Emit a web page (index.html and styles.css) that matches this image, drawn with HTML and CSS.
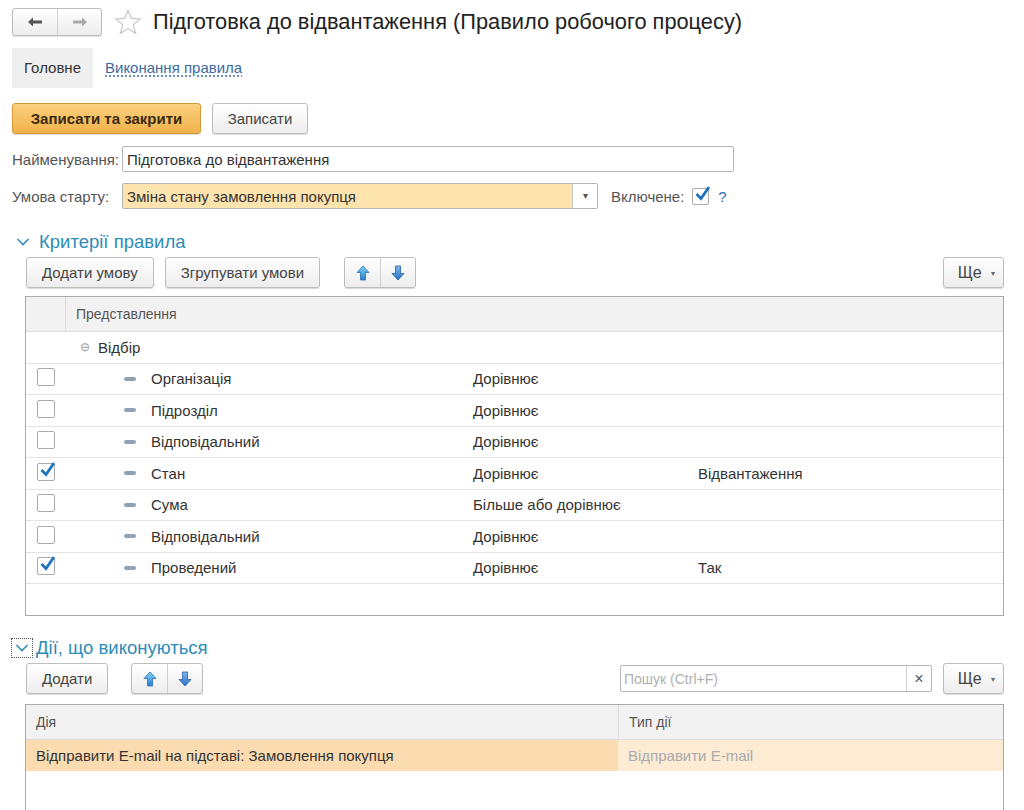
FILE: index.html
```html
<!DOCTYPE html>
<html lang="uk">
<head>
  <meta charset="UTF-8" />
  <title>Підготовка до відвантаження</title>
  <link rel="stylesheet" href="styles.css">
</head>
<body>

  <div class="title-bar">
    <div class="nav-group">
      <button class="nav-btn"><svg width="16" height="12" viewBox="0 0 16 12"><path d="M1 6 L6 1.5 L6 4.5 L15 4.5 L15 7.5 L6 7.5 L6 10.5 Z" fill="#555"/></svg></button>
      <button class="nav-btn"><svg width="16" height="12" viewBox="0 0 16 12"><path d="M15 6 L10 1.5 L10 4.5 L1 4.5 L1 7.5 L10 7.5 L10 10.5 Z" fill="#aaa"/></svg></button>
    </div>
    <svg class="star" width="28" height="28" viewBox="0 0 28 28"><path d="M14 2 L17.3 10.4 L26.2 10.9 L19.3 16.6 L21.6 25.3 L14 20.4 L6.4 25.3 L8.7 16.6 L1.8 10.9 L10.7 10.4 Z" fill="none" stroke="#c8c8c8" stroke-width="1.2"/></svg>
    <h1>Підготовка до відвантаження (Правило робочого процесу)</h1>
  </div>

  <div class="tabs">
    <div class="tab active">Головне</div>
    <div class="tab link">Виконання правила</div>
  </div>

  <div class="commands">
    <button class="btn primary">Записати та закрити</button>
    <button class="btn">Записати</button>
  </div>

  <div class="field-row">
    <label>Найменування:</label>
    <div class="input name-input">Підготовка до відвантаження</div>
  </div>

  <div class="field-row">
    <label>Умова старту:</label>
    <div class="input select-input">
      <span class="select-text">Зміна стану замовлення покупця</span>
      <span class="select-drop">▾</span>
    </div>
    <span class="enabled-label">Включене:</span>
    <span class="checkbox checked"><svg width="16" height="16" viewBox="0 0 16 16"><path d="M2.5 8 L7 12.5 L15 1" fill="none" stroke="#1f74c2" stroke-width="2.8"/></svg></span>
    <span class="help">?</span>
  </div>

  <div class="section-title">
    <span class="chevron"><svg width="14" height="10" viewBox="0 0 14 10"><path d="M1.5 2 L7 7.5 L12.5 2" fill="none" stroke="#2e8cb8" stroke-width="1.6"/></svg></span>
    Критерії правила
  </div>

  <div class="toolbar">
    <button class="btn">Додати умову</button>
    <button class="btn">Згрупувати умови</button>
    <div class="arrow-group">
      <button class="arrow-btn"><svg width="14" height="16" viewBox="0 0 14 16"><defs><linearGradient id="ga" x1="0" y1="0" x2="0" y2="1"><stop offset="0" stop-color="#7fd0f5"/><stop offset="1" stop-color="#2a7fd0"/></linearGradient></defs><path d="M7 1 L13 7.5 L9.5 7.5 L9.5 15 L4.5 15 L4.5 7.5 L1 7.5 Z" fill="url(#ga)" stroke="#2a6fb0" stroke-width="0.8"/></svg></button>
      <button class="arrow-btn"><svg width="14" height="16" viewBox="0 0 14 16"><defs><linearGradient id="gb" x1="0" y1="0" x2="0" y2="1"><stop offset="0" stop-color="#7fb8ec"/><stop offset="1" stop-color="#2a6fc8"/></linearGradient></defs><path d="M7 15 L13 8.5 L9.5 8.5 L9.5 1 L4.5 1 L4.5 8.5 L1 8.5 Z" fill="url(#gb)" stroke="#2a60a8" stroke-width="0.8"/></svg></button>
    </div>
    <div class="spacer"></div>
    <button class="btn more">Ще <span class="caret">▾</span></button>
  </div>

  <div class="grid criteria">
    <div class="grid-head">
      <div class="head-check"></div>
      <div class="c-main">Представлення</div>
    </div>
    <div class="grid-row">
      <div class="c-check"></div>
      <div class="c-main group"><span class="collapse">⊖</span>Відбір</div>
    </div>
    <div class="grid-row">
      <div class="c-check"><span class="checkbox"></span></div>
      <div class="c-name"><span class="dash"></span>Організація</div>
      <div class="c-cond">Дорівнює</div>
      <div class="c-val"></div>
    </div>
    <div class="grid-row">
      <div class="c-check"><span class="checkbox"></span></div>
      <div class="c-name"><span class="dash"></span>Підрозділ</div>
      <div class="c-cond">Дорівнює</div>
      <div class="c-val"></div>
    </div>
    <div class="grid-row">
      <div class="c-check"><span class="checkbox"></span></div>
      <div class="c-name"><span class="dash"></span>Відповідальний</div>
      <div class="c-cond">Дорівнює</div>
      <div class="c-val"></div>
    </div>
    <div class="grid-row">
      <div class="c-check"><span class="checkbox checked"><svg width="16" height="16" viewBox="0 0 16 16"><path d="M2.5 8 L7 12.5 L15 1" fill="none" stroke="#1f74c2" stroke-width="2.8"/></svg></span></div>
      <div class="c-name"><span class="dash"></span>Стан</div>
      <div class="c-cond">Дорівнює</div>
      <div class="c-val">Відвантаження</div>
    </div>
    <div class="grid-row">
      <div class="c-check"><span class="checkbox"></span></div>
      <div class="c-name"><span class="dash"></span>Сума</div>
      <div class="c-cond">Більше або дорівнює</div>
      <div class="c-val"></div>
    </div>
    <div class="grid-row">
      <div class="c-check"><span class="checkbox"></span></div>
      <div class="c-name"><span class="dash"></span>Відповідальний</div>
      <div class="c-cond">Дорівнює</div>
      <div class="c-val"></div>
    </div>
    <div class="grid-row">
      <div class="c-check"><span class="checkbox checked"><svg width="16" height="16" viewBox="0 0 16 16"><path d="M2.5 8 L7 12.5 L15 1" fill="none" stroke="#1f74c2" stroke-width="2.8"/></svg></span></div>
      <div class="c-name"><span class="dash"></span>Проведений</div>
      <div class="c-cond">Дорівнює</div>
      <div class="c-val">Так</div>
    </div>
    <div class="grid-fill"></div>
  </div>

  <div class="section-title second">
    <span class="chevron focused"><svg width="14" height="10" viewBox="0 0 14 10"><path d="M1.5 2 L7 7.5 L12.5 2" fill="none" stroke="#2e8cb8" stroke-width="1.6"/></svg></span>
    Дії, що виконуються
  </div>

  <div class="toolbar">
    <button class="btn">Додати</button>
    <div class="arrow-group narrow">
      <button class="arrow-btn"><svg width="14" height="16" viewBox="0 0 14 16"><path d="M7 1 L13 7.5 L9.5 7.5 L9.5 15 L4.5 15 L4.5 7.5 L1 7.5 Z" fill="url(#ga)" stroke="#2a6fb0" stroke-width="0.8"/></svg></button>
      <button class="arrow-btn"><svg width="14" height="16" viewBox="0 0 14 16"><path d="M7 15 L13 8.5 L9.5 8.5 L9.5 1 L4.5 1 L4.5 8.5 L1 8.5 Z" fill="url(#gb)" stroke="#2a60a8" stroke-width="0.8"/></svg></button>
    </div>
    <div class="spacer"></div>
    <div class="search">
      <span class="search-text">Пошук (Ctrl+F)</span>
      <span class="search-clear">×</span>
    </div>
    <button class="btn more">Ще <span class="caret">▾</span></button>
  </div>

  <div class="grid actions">
    <div class="grid-head">
      <div class="a-name">Дія</div>
      <div class="a-type">Тип дії</div>
    </div>
    <div class="grid-row selected">
      <div class="a-name">Відправити E-mail на підставі: Замовлення покупця</div>
      <div class="a-type">Відправити E-mail</div>
    </div>
    <div class="grid-fill"></div>
  </div>

</body>
</html>
```

FILE: styles.css
```css
body, html {
  margin: 0;
  padding: 0;
  background: #fff;
  font-family: "Liberation Sans", Arial, sans-serif;
  font-size: 15px;
  color: #333;
}

body {
  padding: 8px 20px 0 12px;
  overflow: hidden;
}

button {
  font-family: inherit;
}

.title-bar {
  display: flex;
  align-items: center;
  height: 28px;
}

.nav-group {
  display: flex;
  border: 1px solid #bcbcbc;
  border-radius: 3px;
  box-shadow: 0 1px 1px rgba(0,0,0,0.12);
  background: linear-gradient(#fff, #ececec);
}

.nav-btn {
  width: 44px;
  height: 26px;
  border: none;
  background: transparent;
  padding: 0;
  display: flex;
  align-items: center;
  justify-content: center;
}

.nav-btn + .nav-btn {
  border-left: 1px solid #d0d0d0;
}

.star {
  margin: 0 11px 0 12px;
}

.title-bar h1 {
  margin: 0;
  font-size: 21.8px;
  font-weight: normal;
  color: #222;
}

.tabs {
  display: flex;
  align-items: center;
  margin-top: 12px;
  height: 40px;
}

.tab {
  padding: 0 12px;
  height: 40px;
  line-height: 40px;
}

.tab.active {
  background: #efefef;
  color: #333;
}

.tab.link {
  color: #3c6aa0;
  text-decoration: underline dotted #3c6aa0;
  text-underline-offset: 3px;
}

.commands {
  display: flex;
  gap: 11px;
  margin-top: 15px;
}

.btn {
  height: 31px;
  padding: 0 15px;
  border: 1px solid #bdbdbd;
  border-radius: 3px;
  background: linear-gradient(#fff, #ededed);
  box-shadow: 0 1px 1px rgba(0,0,0,0.15);
  font-size: 15px;
  color: #444;
  cursor: pointer;
}

.btn.primary {
  width: 189px;
  padding: 0;
  background: linear-gradient(#fbd07f, #f0b24a);
  border-color: #d49a3a;
  color: #3a2a10;
  font-weight: bold;
}

.commands .btn + .btn {
  width: 96px;
  padding: 0;
}

.field-row {
  display: flex;
  align-items: center;
  margin-top: 12px;
  height: 26px;
}

.field-row + .field-row {
  margin-top: 11px;
}

.field-row label {
  width: 110px;
  color: #555;
}

.input {
  height: 24px;
  border: 1px solid #b5b5b5;
  border-radius: 2px;
  display: flex;
  align-items: center;
  padding-left: 4px;
  box-sizing: content-box;
  color: #333;
}

.name-input {
  width: 606px;
}

.select-input {
  width: 474px;
  padding-left: 0;
  background: #fde4ae;
}

.select-text {
  flex: 1;
  padding-left: 4px;
}

.select-drop {
  width: 24px;
  height: 24px;
  background: #fff;
  border-left: 1px solid #c8c8c8;
  text-align: center;
  line-height: 24px;
  font-size: 10px;
  color: #555;
}

.enabled-label {
  margin-left: 13px;
  color: #555;
}

.checkbox {
  display: inline-flex;
  align-items: center;
  justify-content: center;
  width: 15px;
  height: 15px;
  border: 1px solid #aaa;
  border-radius: 2px;
  background: #fff;
}

.checkbox svg {
  margin: -4px -3px 0 0;
}

.field-row .checkbox {
  margin-left: 8px;
}

.help {
  margin-left: 9px;
  color: #2f6fb5;
}

.section-title {
  display: flex;
  align-items: center;
  margin-top: 22px;
  height: 22px;
  font-size: 18.5px;
  color: #2e8cb8;
}

.chevron {
  width: 20px;
  height: 18px;
  display: flex;
  align-items: center;
  justify-content: center;
  margin: 0 6px 0 1px;
}

.chevron.focused {
  outline: 1px dotted #555;
  margin: 0 4px 0 0;
}

.section-title.second {
  margin-top: 21px;
}

.toolbar {
  display: flex;
  align-items: center;
  gap: 11px;
  margin: 4px 0 0 14px;
  height: 31px;
}

.arrow-group {
  display: flex;
  margin-left: 13px;
  border: 1px solid #bdbdbd;
  border-radius: 3px;
  background: linear-gradient(#fff, #ededed);
  box-shadow: 0 1px 1px rgba(0,0,0,0.15);
}

.arrow-group.narrow {
  margin-left: 12px;
}

.arrow-btn {
  width: 35px;
  height: 29px;
  border: none;
  background: transparent;
  padding: 0;
  display: flex;
  align-items: center;
  justify-content: center;
}

.arrow-btn + .arrow-btn {
  border-left: 1px solid #d0d0d0;
}

.spacer {
  flex: 1;
}

.btn.more {
  width: 61px;
  padding: 0 0 0 6px;
  font-size: 16px;
}

.caret {
  font-size: 8px;
  margin-left: 5px;
  color: #666;
  vertical-align: 2px;
}

.search {
  display: flex;
  align-items: center;
  width: 310px;
  height: 25px;
  border: 1px solid #b5b5b5;
  border-radius: 2px;
}

.search-text {
  flex: 1;
  padding-left: 3px;
  color: #b0b0b0;
  font-size: 14px;
}

.search-clear {
  width: 24px;
  height: 25px;
  line-height: 25px;
  text-align: center;
  border-left: 1px solid #d0d0d0;
  color: #555;
  font-size: 16px;
}

.grid {
  margin: 8px 0 0 13px;
  border: 1px solid #a9a9a9;
  width: 977px;
}

.grid.actions {
  margin-top: 10px;
}

.grid-head {
  display: flex;
  height: 34px;
  background: #f2f2f2;
  border-bottom: 1px solid #ddd;
  color: #555;
  font-size: 14px;
}

.grid-head > div {
  display: flex;
  align-items: center;
}

.head-check {
  width: 39px;
  border-right: 1px solid #dcdcdc;
}

.c-main {
  padding-left: 10px;
}

.grid-row {
  display: flex;
  height: 30.5px;
  border-bottom: 1px solid #e4e4e4;
}

.grid-row > div {
  display: flex;
  align-items: center;
}

.c-check {
  width: 40px;
  justify-content: center;
}

.c-check .checkbox {
  width: 16px;
  height: 16px;
  margin-left: -1px;
  margin-top: -3px;
}

.c-main.group {
  padding-left: 14px;
}

.collapse {
  color: #999;
  font-size: 12px;
  margin-right: 8px;
}

.c-name {
  width: 349px;
  padding-left: 58px;
}

.dash {
  display: inline-block;
  width: 12px;
  height: 4px;
  border-radius: 2px;
  background: #8ea2b6;
  margin-right: 15px;
}

.c-cond {
  width: 225px;
}

.grid-fill {
  height: 31px;
}

.a-name {
  width: 582px;
  padding-left: 10px;
  border-right: 1px solid #dcdcdc;
}

.a-type {
  flex: 1;
  padding-left: 10px;
}

.grid-row.selected {
  background: #fbdcb0;
  border-bottom: none;
}

.grid-row.selected .a-name {
  border-right: none;
}

.grid-row.selected .a-type {
  background: #fdebd4;
  color: #aaa;
}

.actions .grid-fill {
  height: 60px;
}
```
